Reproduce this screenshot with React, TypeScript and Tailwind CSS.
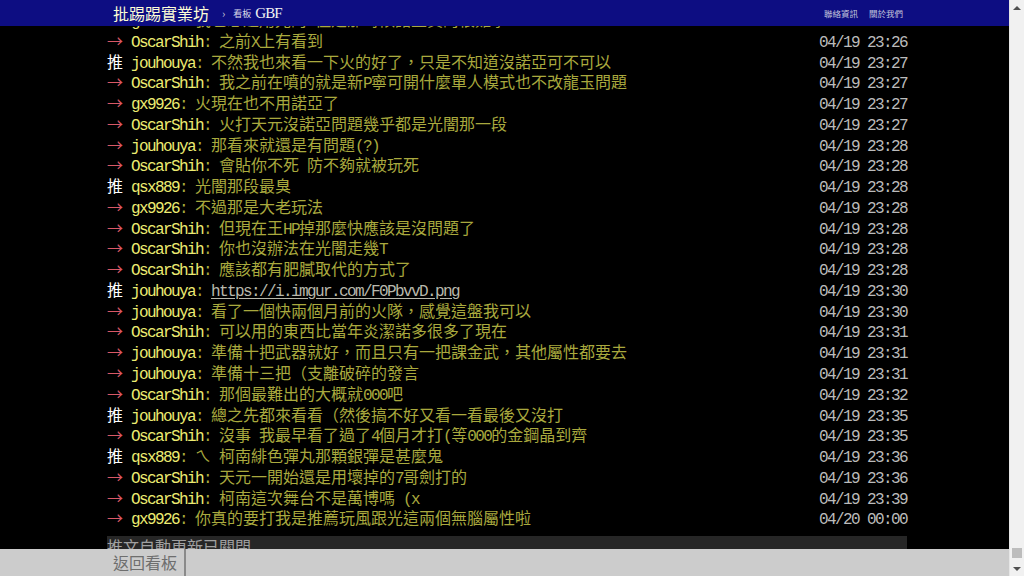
import React from "react";

type Push = { tag: "推" | "→"; user: string; text: string; time: string; link?: boolean };

const pushes: Push[] = [
  { tag: "→", user: "gx9926", text: "我也想過用光的 但是那時候諾亞真的很難拿", time: "04/19 23:26" },
  { tag: "→", user: "OscarShih", text: "之前X上有看到", time: "04/19 23:26" },
  { tag: "推", user: "jouhouya", text: "不然我也來看一下火的好了，只是不知道沒諾亞可不可以", time: "04/19 23:27" },
  { tag: "→", user: "OscarShih", text: "我之前在噴的就是新P寧可開什麼單人模式也不改龍玉問題", time: "04/19 23:27" },
  { tag: "→", user: "gx9926", text: "火現在也不用諾亞了", time: "04/19 23:27" },
  { tag: "→", user: "OscarShih", text: "火打天元沒諾亞問題幾乎都是光闇那一段", time: "04/19 23:27" },
  { tag: "→", user: "jouhouya", text: "那看來就還是有問題(?)", time: "04/19 23:28" },
  { tag: "→", user: "OscarShih", text: "會貼你不死 防不夠就被玩死", time: "04/19 23:28" },
  { tag: "推", user: "qsx889", text: "光闇那段最臭", time: "04/19 23:28" },
  { tag: "→", user: "gx9926", text: "不過那是大老玩法", time: "04/19 23:28" },
  { tag: "→", user: "OscarShih", text: "但現在王HP掉那麼快應該是沒問題了", time: "04/19 23:28" },
  { tag: "→", user: "OscarShih", text: "你也沒辦法在光闇走幾T", time: "04/19 23:28" },
  { tag: "→", user: "OscarShih", text: "應該都有肥膩取代的方式了", time: "04/19 23:28" },
  { tag: "推", user: "jouhouya", text: "https://i.imgur.com/F0PbvvD.png", time: "04/19 23:30", link: true },
  { tag: "→", user: "jouhouya", text: "看了一個快兩個月前的火隊，感覺這盤我可以", time: "04/19 23:30" },
  { tag: "→", user: "OscarShih", text: "可以用的東西比當年炎潔諾多很多了現在", time: "04/19 23:31" },
  { tag: "→", user: "jouhouya", text: "準備十把武器就好，而且只有一把課金武，其他屬性都要去", time: "04/19 23:31" },
  { tag: "→", user: "jouhouya", text: "準備十三把（支離破碎的發言", time: "04/19 23:31" },
  { tag: "→", user: "OscarShih", text: "那個最難出的大概就000吧", time: "04/19 23:32" },
  { tag: "推", user: "jouhouya", text: "總之先都來看看（然後搞不好又看一看最後又沒打", time: "04/19 23:35" },
  { tag: "→", user: "OscarShih", text: "沒事 我最早看了過了4個月才打(等000的金鋼晶到齊", time: "04/19 23:35" },
  { tag: "推", user: "qsx889", text: "ㄟ 柯南緋色彈丸那顆銀彈是甚麼鬼", time: "04/19 23:36" },
  { tag: "→", user: "OscarShih", text: "天元一開始還是用壞掉的7哥劍打的", time: "04/19 23:36" },
  { tag: "→", user: "OscarShih", text: "柯南這次舞台不是萬博嗎 (x", time: "04/19 23:39" },
  { tag: "→", user: "gx9926", text: "你真的要打我是推薦玩風跟光這兩個無腦屬性啦", time: "04/20 00:00" },
];

const latin = "font-['Liberation_Mono',monospace] text-[16px] tracking-[-1.6px]";

// half-width runs get the narrow mono font, the rest stays CJK
const seg = (s: string) =>
  s
    .split(/([\x20-\x7e]+)/)
    .filter(Boolean)
    .map((p, i) =>
      /^[\x20-\x7e]+$/.test(p) ? (
        <span key={i} className={latin}>
          {p}
        </span>
      ) : (
        <span key={i}>{p}</span>
      )
    );

const Row = ({ p }: { p: Push }) => (
  <div className="flex items-baseline h-[20.78px] leading-[20.78px] whitespace-pre">
    <span className={`w-[24px] shrink-0 ${p.tag === "推" ? "text-white" : "text-[#d95866]"}`}>{p.tag}</span>
    <span className="text-[#ecec72]">{seg(p.user)}</span>
    <span className="text-[#a9a93e]">
      {seg(": ")}
      {p.link ? <span className="text-[#b8b8ac] underline underline-offset-2">{seg(p.text)}</span> : seg(p.text)}
    </span>
    <span className={`ml-auto text-[#bbbbbb] ${latin}`}>{p.time}</span>
  </div>
);

const Scrollbar = () => (
  <div className="w-[15px] h-full bg-[#f1f1f1] border-l border-[#e6e6e6] flex flex-col items-center">
    <div className="h-[15px] flex items-center justify-center">
      <div className="w-0 h-0 border-l-[4px] border-r-[4px] border-b-[4px] border-l-transparent border-r-transparent border-b-[#505050]" />
    </div>
    <div className="flex-1" />
    <div className="w-[10px] h-[10px] bg-[#bdbdbd] mb-[3px]" />
    <div className="h-[15px] flex items-center justify-center">
      <div className="w-0 h-0 border-l-[4px] border-r-[4px] border-t-[4px] border-l-transparent border-r-transparent border-t-[#505050]" />
    </div>
  </div>
);

export default function App() {
  return (
    <div className="w-[1024px] h-[576px] flex overflow-hidden bg-black font-['Noto_Sans_CJK_TC',sans-serif] text-[16px]">
      <div className="relative flex-1 h-full overflow-hidden">
        <div className="ml-[107px] w-[800px] pt-[9px]">
          {pushes.map((p, i) => (
            <Row key={i} p={p} />
          ))}
          <div className="mt-[8px] bg-[#262626] text-[#a0a0a0] leading-[20px] h-[30px]">推文自動更新已關閉</div>
        </div>

        <div className="absolute top-0 left-0 right-0 h-[26px] bg-[#0d0d82]">
          <div className="ml-[107px] w-[800px] h-full flex items-center justify-between pl-[6px] pr-[4px]">
            <div className="flex items-center">
              <span className="text-[#fdfdd6] text-[16px] leading-none">批踢踢實業坊</span>
              <span className="text-[#c8c8d8] text-[11px] ml-[13px] mr-[8px] leading-none">›</span>
              <span className="text-[#d8d8e8] text-[9px] leading-none">看板</span>
              <span className="text-[#f4f4f4] font-['Liberation_Serif',serif] text-[15px] tracking-[-1px] ml-[4px] leading-none">GBF</span>
            </div>
            <div className="flex items-center gap-[11px] text-[#c4c4dc] text-[8.5px] leading-none">
              <span>聯絡資訊</span>
              <span>關於我們</span>
            </div>
          </div>
        </div>

        <div className="absolute bottom-0 left-0 right-0 h-[27px] bg-[#cccccc]">
          <div className="ml-[107px] h-full flex">
            <div className="pl-[6px] pr-[7px] border-r-2 border-[#8a8a8a] text-[#6e6e6e] text-[16px] leading-[27px]">返回看板</div>
          </div>
        </div>
      </div>
      <Scrollbar />
    </div>
  );
}
